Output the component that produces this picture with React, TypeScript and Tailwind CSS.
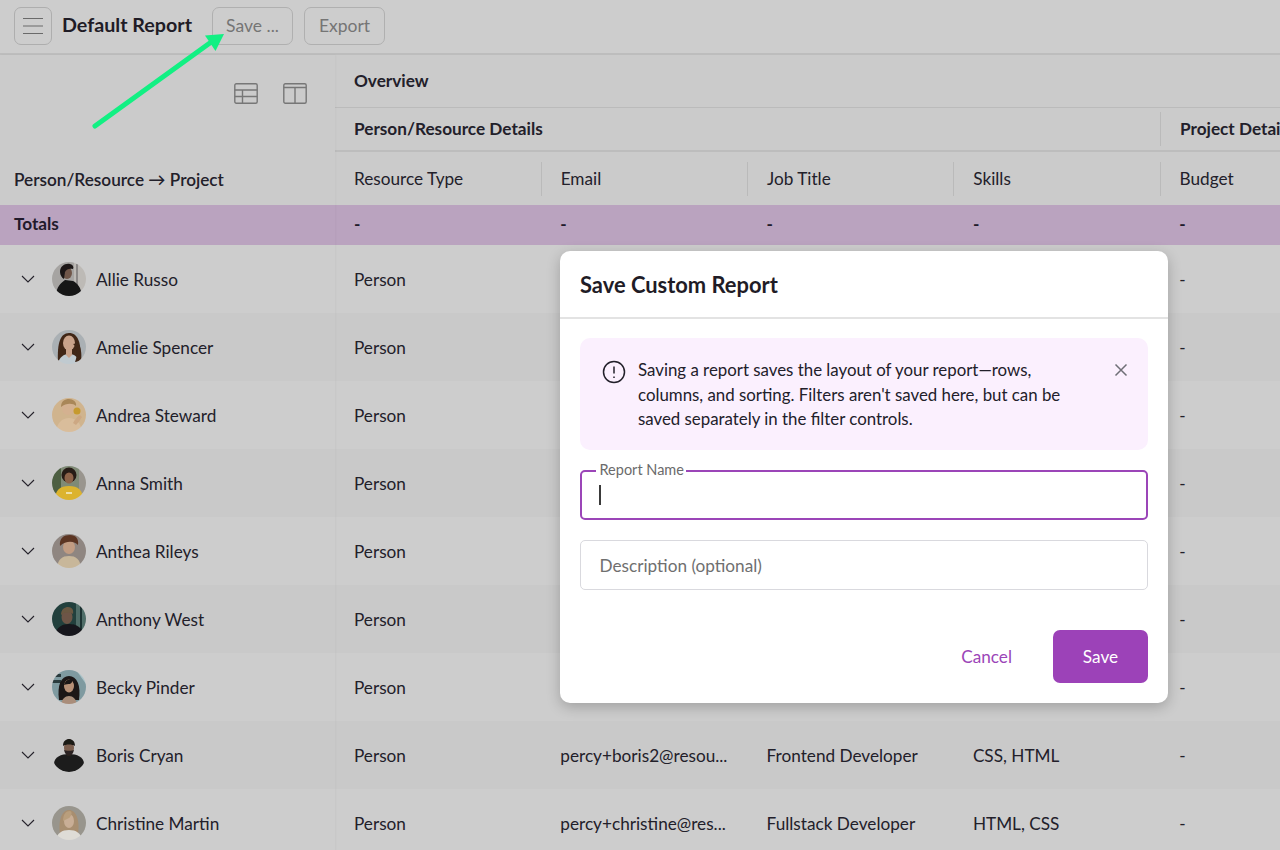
import React from "react";

const avatars: React.ReactNode[] = [
  // Allie
  <>
    <rect width="34" height="34" fill="#a6a4a2" />
    <rect x="22" y="0" width="12" height="34" fill="#bdbab6" />
    <rect x="24" y="2" width="2" height="28" fill="#8b8887" />
    <path d="M4 34c0-9 5-13 9-16l8 1c4 2 8 6 9 15z" fill="#121214" />
    <ellipse cx="15" cy="11" rx="5" ry="6" fill="#6f5648" />
    <path d="M8 10c0-6 5-9 10-8 3 .6 4 3 3 5-3-1-7 0-8 3l-1 7c-2-1-4-4-4-7z" fill="#1b1818" />
  </>,
  // Amelie
  <>
    <rect width="34" height="34" fill="#aab0b4" />
    <path d="M6 32C5 14 8 3 17 3s13 10 11 29z" fill="#3f2719" />
    <path d="M6 34c1-7 6-10 11-10s10 3 11 10z" fill="#c0cad0" />
    <ellipse cx="17" cy="13" rx="6" ry="7.500" fill="#c8a28a" />
    <path d="M14 18h6v7l-3 3-3-3z" fill="#c8a28a" />
    <path d="M21 14c4 3 5 11 2 18l6-1c1-7 0-14-3-18z" fill="#3f2719" />
  </>,
  // Andrea
  <>
    <rect width="34" height="34" fill="#d0b48e" />
    <path d="M4 34c1-9 6-14 13-14s12 5 13 14z" fill="#d9bd9b" />
    <ellipse cx="16" cy="10" rx="6" ry="7" fill="#d4b190" />
    <path d="M9 9c0-6 4-8 8-8s8 3 7 7c-3-3-10-3-15 1z" fill="#a98759" />
    <circle cx="25" cy="13" r="3.500" fill="#c69a2e" />
    <path d="M21 25c2-4 5-7 7-8l2 2c-2 3-4 6-6 8z" fill="#cda883" />
  </>,
  // Anna
  <>
    <rect width="34" height="34" fill="#7f8a76" />
    <rect x="0" y="0" width="9" height="34" fill="#4d5f42" />
    <rect x="27" y="0" width="7" height="34" fill="#99958e" />
    <path d="M3 34c0-10 5-14 14-14s14 4 14 14z" fill="#dcb32f" />
    <circle cx="17" cy="9" r="7.500" fill="#281a13" />
    <ellipse cx="17" cy="12" rx="4.500" ry="5.500" fill="#8d634a" />
    <rect x="14" y="26" width="6" height="2" fill="#eee0a8" />
  </>,
  // Anthea
  <>
    <rect width="34" height="34" fill="#8f8681" />
    <path d="M5 34c1-9 5-12 12-12s11 3 12 12z" fill="#c8b79a" />
    <ellipse cx="17" cy="13" rx="6" ry="7" fill="#c29c82" />
    <path d="M8 12C7 4 12 1 18 1s9 4 8 10c-3-4-12-5-18 1z" fill="#5c3524" />
  </>,
  // Anthony
  <>
    <rect width="34" height="34" fill="#22403e" />
    <rect x="24" y="0" width="10" height="34" fill="#4f6d68" />
    <rect x="28" y="0" width="2" height="34" fill="#1d3331" />
    <path d="M3 34c1-9 7-12 14-12s14 3 14 12z" fill="#15181a" />
    <ellipse cx="15" cy="15" rx="5.500" ry="7" fill="#6d5546" />
    <path d="M9 13c0-6 4-8 7-8 4 0 6 3 5 7-3-2-8-2-12 1z" fill="#6a5842" />
  </>,
  // Becky
  <>
    <rect width="34" height="34" fill="#7f9aa0" />
    <rect x="0" y="4" width="9" height="3" fill="#2c3a3d" />
    <rect x="0" y="10" width="9" height="3" fill="#2c3a3d" />
    <path d="M24 0l10 14v-14z" fill="#aac3c8" />
    <path d="M7 30C5 15 9 6 17 6s12 9 10 24z" fill="#1d1715" />
    <path d="M9 34c1-5 4-8 8-8s7 3 8 8z" fill="#a98d7a" />
    <ellipse cx="17" cy="16" rx="5" ry="6.500" fill="#b78f76" />
    <path d="M12 15c1-4 4-6 8-6 1 2 0 4-2 5-2 0-4 0-6 1z" fill="#1d1715" />
  </>,
  // Boris
  <>
    <circle cx="17" cy="17" r="17" fill="#c9c9c9" />
    <path d="M2 26c0-7 7-10 15-10s15 3 15 10c0 4-7 8-15 8S2 30 2 26z" fill="#1f1e1f" />
    <ellipse cx="17" cy="10" rx="5" ry="6.500" fill="#7b5f4f" />
    <path d="M11 8c0-5 3-7 6-7s6 2 6 7c-3-2-9-2-12 0z" fill="#1f1a18" />
    <path d="M12 12c1 4 3 6 5 6s4-2 5-6c-1 1-9 1-10 0z" fill="#2a2220" />
  </>,
  // Christine
  <>
    <rect width="34" height="34" fill="#98958d" />
    <path d="M8 28C6 14 10 4 17 4s11 10 9 24z" fill="#a88e6f" />
    <path d="M4 34c1-7 6-10 13-10s12 3 13 10z" fill="#dedcd6" />
    <ellipse cx="17" cy="15" rx="5" ry="7" fill="#c9ae96" />
    <path d="M11 15c0-7 3-10 7-10 3 1 1 5-1 7-2 1-4 2-6 3z" fill="#b99e7c" />
  </>,
];

const people: { name: string; email?: string; job?: string; skills?: string }[] = [
  { name: "Allie Russo" },
  { name: "Amelie Spencer" },
  { name: "Andrea Steward" },
  { name: "Anna Smith" },
  { name: "Anthea Rileys" },
  { name: "Anthony West" },
  { name: "Becky Pinder" },
  { name: "Boris Cryan", email: "percy+boris2@resou...", job: "Frontend Developer", skills: "CSS, HTML" },
  { name: "Christine Martin", email: "percy+christine@res...", job: "Fullstack Developer", skills: "HTML, CSS" },
];

function Avatar({ i }: { i: number }) {
  return (
    <svg width="34" height="34" viewBox="0 0 34 34" className="shrink-0">
      <defs>
        <clipPath id={`c${i}`}>
          <circle cx="17" cy="17" r="17" />
        </clipPath>
        <filter id={`b${i}`}>
          <feGaussianBlur stdDeviation="0.500" />
        </filter>
      </defs>
      <g clipPath={`url(#c${i})`}>
        <g filter={`url(#b${i})`}>{avatars[i]}</g>
      </g>
    </svg>
  );
}

function Chevron() {
  return (
    <svg width="14" height="8" viewBox="0 0 14 8" fill="none" stroke="#25222b" strokeWidth="1.100" className="shrink-0">
      <path d="M1 1l6 6 6-6" />
    </svg>
  );
}

function Cell({ children }: { children?: React.ReactNode }) {
  return <div className="w-[206.300px] shrink-0 pl-[19px] truncate">{children}</div>;
}

function HeadCell({ children, first }: { children: React.ReactNode; first?: boolean }) {
  return (
    <div className={`${first ? "w-[205.700px]" : "w-[206.300px]"} shrink-0 h-[34px] flex items-center`}>
      {first ? null : <div className="w-px h-full bg-[#bababa] shrink-0" />}
      <span className="pl-[19px]">{children}</span>
    </div>
  );
}

export default function App() {
  return (
    <div
      className="relative w-[1280px] h-[850px] overflow-hidden bg-[#cdcdcd] text-[17.200px] text-[#22202a]"
      style={{ fontFamily: "Lato, 'Noto Sans', sans-serif" }}
    >
      {/* top bar */}
      <header className="h-[55px] flex items-center pl-[14px] pb-[2px] border-b-[2px] border-[#bdbdbd] bg-[#cdcdcd]">
        <button className="w-[38px] h-[38px] rounded-[7px] border border-[#aeaeae] flex items-center justify-center">
          <svg width="22" height="18" viewBox="0 0 22 18" fill="none" stroke="#6a6a6a" strokeWidth="1.200">
            <path d="M1 1.500h20M1 9h20M1 16.500h20" />
          </svg>
        </button>
        <h1 className="ml-[10px] w-[150px] text-[19.700px] font-bold text-[#1f1c26] pb-[2px]">Default Report</h1>
        <button className="w-[81px] h-[38px] rounded-[7px] border border-[#b0b0b0] text-[#757575] text-[17.500px] pt-[1px]">Save ...</button>
        <button className="ml-[11px] w-[81px] h-[38px] rounded-[7px] border border-[#b0b0b0] text-[#757575] text-[17.500px] pt-[1px]">Export</button>
      </header>

      <div className="flex">
        {/* left frozen column */}
        <aside className="relative z-10 w-[335px] shrink-0 shadow-[1px_0_2px_rgba(0,0,0,0.030)]">
          <div className="h-[150px] flex flex-col bg-[#cbcbcb]">
            <div className="h-[76px] flex items-end justify-end gap-[25px] pr-[28px] pb-[27px]">
              <svg width="24" height="21" viewBox="0 0 24 21" fill="none" stroke="#777" strokeWidth="1.400">
                <rect x="0.800" y="0.800" width="22.400" height="19.400" rx="1.500" />
                <path d="M0.800 7h22.400M0.800 13.500h22.400M8.500 7v13" />
              </svg>
              <svg width="24" height="21" viewBox="0 0 24 21" fill="none" stroke="#777" strokeWidth="1.400">
                <rect x="0.800" y="0.800" width="22.400" height="19.400" rx="1.500" />
                <path d="M0.800 4.500h22.400M12 4.500v15.700" />
              </svg>
            </div>
            <div className="flex-1 flex items-end pl-[14px] pb-[12px] font-semibold">Person/Resource → Project</div>
          </div>
          <div className="h-[40px] flex items-center pl-[14px] pb-[3px] bg-[#baa3bf] font-bold text-[#211a2b]">Totals</div>
          {people.map((p, i) => (
            <div key={p.name} className={`h-[68px] flex items-center pl-[21px] ${i % 2 ? "bg-[#c9c9c9]" : "bg-[#cdcdcd]"}`}>
              <Chevron />
              <div className="ml-[17px] mr-[10px] flex"><Avatar i={i} /></div>
              <span className="pt-[2px]">{p.name}</span>
            </div>
          ))}
        </aside>

        {/* scrolling columns */}
        <main className="flex-1 min-w-0 overflow-hidden">
          <div className="bg-[#cbcbcb]">
            <div className="h-[53px] flex items-center pl-[19px] font-bold border-b-[1.500px] border-[#bbbbbb]">Overview</div>
            <div className="h-[44px] flex items-center border-b-[2px] border-[#bdbdbd] font-bold">
              <div className="w-[825px] shrink-0 pl-[19px]">Person/Resource Details</div>
              <div className="w-px h-[34px] bg-[#bababa] shrink-0" />
              <div className="pl-[19px] whitespace-nowrap">Project Details</div>
            </div>
            <div className="h-[53px] flex items-center">
              <HeadCell first>Resource Type</HeadCell>
              <HeadCell>Email</HeadCell>
              <HeadCell>Job Title</HeadCell>
              <HeadCell>Skills</HeadCell>
              <HeadCell>Budget</HeadCell>
            </div>
          </div>
          <div className="h-[40px] flex items-center pb-[3px] bg-[#baa3bf] font-bold text-[#211a2b]">
            {[0, 1, 2, 3, 4].map((n) => (
              <Cell key={n}>-</Cell>
            ))}
          </div>
          {people.map((p, i) => (
            <div key={p.name} className={`h-[68px] flex items-center pt-[2px] ${i % 2 ? "bg-[#c9c9c9]" : "bg-[#cdcdcd]"}`}>
              <Cell>Person</Cell>
              <Cell>{p.email}</Cell>
              <Cell>{p.job}</Cell>
              <Cell>{p.skills}</Cell>
              <Cell>-</Cell>
            </div>
          ))}
        </main>
      </div>

      {/* annotation arrow */}
      <svg className="absolute z-20 left-[85px] top-[25px] pointer-events-none" width="150" height="110" viewBox="85 25 150 110" fill="none">
        <path d="M95 126L214 40" stroke="#12f083" strokeWidth="5" strokeLinecap="round" />
        <path d="M205 35.500L224 34L215.500 51z" fill="#12f083" />
      </svg>

      {/* dialog */}
      <div className="absolute z-30 left-[560px] top-[251px] w-[608px] h-[452px] bg-white rounded-[10px] shadow-[0_4px_14px_rgba(0,0,0,0.220)]">
        <div className="h-[68px] flex items-center px-[20px] pt-[3px] border-b-[2px] border-[#e3e3e3] text-[21.900px] font-bold text-[#1f1c26]">
          Save Custom Report
        </div>
        <div className="px-[20px] pt-[19px]">
          <div className="h-[112px] rounded-[10px] bg-[#fbf0fe] flex pl-[22px] pr-[20px] pt-[20px]">
            <svg width="24" height="24" viewBox="0 0 24 24" fill="none" stroke="#22202a" strokeWidth="1.500" className="shrink-0 mt-[2px]">
              <circle cx="12" cy="12" r="10.500" />
              <path d="M12 6.500v7" />
              <path d="M12 16.500v1.500" />
            </svg>
            <p className="ml-[12px] flex-1 text-[16.850px] leading-[24.500px] text-[#22202a]">
              Saving a report saves the layout of your report—rows,
              <br />
              columns, and sorting. Filters aren't saved here, but can be
              <br />
              saved separately in the filter controls.
            </p>
            <svg width="14" height="14" viewBox="0 0 14 14" fill="none" stroke="#6f6f76" strokeWidth="1.500" className="shrink-0 mt-[5px]">
              <path d="M1.500 1.500l11 11M12.500 1.500l-11 11" />
            </svg>
          </div>

          <div className="relative mt-[20px] h-[50px] rounded-[5px] border-[2.500px] border-[#9b45b8] flex items-center pl-[16.500px]">
            <div className="absolute left-[13.500px] -top-[10.500px] bg-white pl-[4px] pr-[2px] text-[14.500px] leading-[16px] text-[#6b6b6b]">Report Name</div>
            <div className="w-[2px] h-[20px] bg-[#3a3a3a]" />
          </div>

          <div className="mt-[20px] h-[50px] rounded-[5px] border border-[#d9d9de] flex items-center pl-[18.500px] pt-[2px] text-[#6f6f6f]">
            Description (optional)
          </div>

          <div className="mt-[40px] flex items-center justify-end">
            <button className="text-[#9b45b8] mr-[41px]">Cancel</button>
            <button className="w-[95px] h-[53px] rounded-[7px] bg-[#9c42b8] text-white">Save</button>
          </div>
        </div>
      </div>
    </div>
  );
}
